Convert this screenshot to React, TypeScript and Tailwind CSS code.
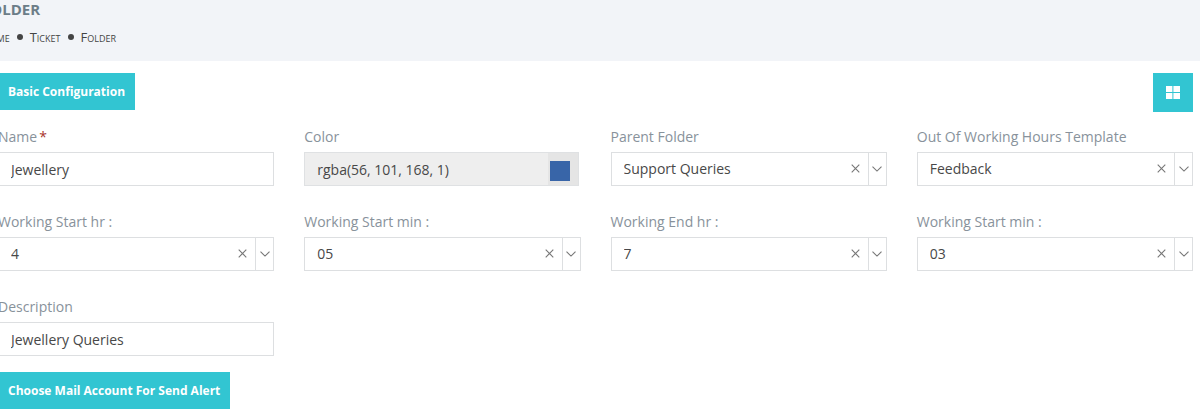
import React, { useId, useRef, useState } from 'react';

interface SelectFieldProps {
  label: string;
  initial: string;
  options: string[];
}

interface TextFieldProps {
  label: string;
  initial: string;
  required?: boolean;
}

const hours = Array.from({ length: 24 }, (_, i) => String(i));
const minutes = Array.from({ length: 60 }, (_, i) => String(i).padStart(2, '0'));

const labelClass = 'block text-sm leading-5 text-[#88929b] mb-[5px]';

const TextField: React.FC<TextFieldProps> = ({ label, initial, required }) => {
  const id = useId();
  const [value, setValue] = useState(initial);

  return (
    <div>
      <label htmlFor={id} className={labelClass}>
        {label}
        {required && <span className="text-sm text-[#a8342c] ml-0.5">*</span>}
      </label>
      <input
        id={id}
        type="text"
        value={value}
        required={required}
        onChange={(e) => setValue(e.target.value)}
        className="block w-full h-[34px] px-3 pt-px border border-[#dddfe1] bg-white text-sm text-[#484848] focus:outline-none focus:border-[#93a1bb]"
      />
    </div>
  );
};

const ColorField: React.FC = () => {
  const id = useId();

  return (
    <div>
      <label htmlFor={id} className={labelClass}>Color</label>
      <div className="flex h-[34px] mr-0.5 border border-[#dfe1e3] bg-[#eeeeee]">
        <input
          id={id}
          type="text"
          readOnly
          value="rgba(56, 101, 168, 1)"
          className="flex-1 min-w-0 px-3 pt-px text-sm text-[#484848] focus:outline-none"
        />
        <button type="button" aria-label="Pick color" className="w-[30px] pl-0.5 pt-1 bg-[#e5e5e5]">
          <span className="block size-5 bg-[#3865a8]" />
        </button>
      </div>
    </div>
  );
};

const SelectField: React.FC<SelectFieldProps> = ({ label, initial, options }) => {
  const id = useId();
  const ref = useRef<HTMLSelectElement>(null);
  const [value, setValue] = useState(initial);

  return (
    <div>
      <label htmlFor={id} className={labelClass}>{label}</label>
      <div className="flex h-[34px] border border-[#dddfe1] bg-white text-[#777777]">
        <select
          id={id}
          ref={ref}
          value={value}
          onChange={(e) => setValue(e.target.value)}
          className="flex-1 min-w-0 appearance-none px-3 text-sm text-[#484848] focus:outline-none"
        >
          <option value="" />
          {options.map((option) => (
            <option key={option} value={option}>{option}</option>
          ))}
        </select>
        <button
          type="button"
          aria-label={`Clear ${label}`}
          onClick={() => setValue('')}
          className="flex w-[25px] items-center justify-center pb-px"
        >
          <svg width="9" height="9" viewBox="0 0 9 9" fill="none" stroke="currentColor" strokeWidth="1.1">
            <path d="M0.7 0.7l7.6 7.6M8.3 0.7l-7.6 7.6" />
          </svg>
        </button>
        <button
          type="button"
          aria-label={`Open ${label}`}
          onClick={() => ref.current?.showPicker()}
          className="flex w-[18px] items-center justify-center border-l border-[#dddfe1] pb-px"
        >
          <svg width="10" height="6" viewBox="0 0 10 6" fill="none" stroke="currentColor" strokeWidth="1.1">
            <path d="M0.5 0.7l4.5 4.4 4.5-4.4" />
          </svg>
        </button>
      </div>
    </div>
  );
};

const App: React.FC = () => {
  return (
    <div className="overflow-hidden bg-white font-['Open_Sans',sans-serif]">
      <header className="h-[61px] -ml-5 bg-[#f2f4f8]">
        <h1 className="pl-0.5 text-[15px] leading-[18px] font-bold text-[#6c7d88]">FOLDER</h1>
        <nav aria-label="Breadcrumb" className="mt-2.5">
          <ol className="flex items-center gap-[7px] text-[13px] leading-[18px] text-[#444444] [font-variant:small-caps]">
            <li><a href="#home">Home</a></li>
            <li className="size-1.5 rounded-full bg-[#444444]" aria-hidden="true" />
            <li><a href="#ticket">Ticket</a></li>
            <li className="size-1.5 rounded-full bg-[#444444]" aria-hidden="true" />
            <li><a href="#folder">Folder</a></li>
          </ol>
        </nav>
      </header>

      <main className="-ml-0.5 pt-3 pb-[7px] pr-[7px]">
        <div className="flex items-start justify-between">
          <button type="button" className="h-[37px] px-2.5 bg-[#32c5d2] text-xs font-bold text-white">
            Basic Configuration
          </button>
          <button type="button" aria-label="Grid view" className="flex h-[39px] w-10 items-center justify-center bg-[#32c5d2] text-white">
            <svg width="14" height="13" viewBox="0 0 14 13" fill="currentColor">
              <path d="M0 0h6.4v6H0zM7.4 0H14v6H7.4zM0 7h6.4v6H0zM7.4 7H14v6H7.4z" />
            </svg>
          </button>
        </div>

        <form className="mt-[15px] grid grid-cols-4 gap-x-[30px] gap-y-[26px]">
          <TextField label="Name" initial="Jewellery" required />
          <ColorField />
          <SelectField label="Parent Folder" initial="Support Queries" options={['Support Queries']} />
          <SelectField label="Out Of Working Hours Template" initial="Feedback" options={['Feedback']} />
          <SelectField label="Working Start hr :" initial="4" options={hours} />
          <SelectField label="Working Start min :" initial="05" options={minutes} />
          <SelectField label="Working End hr :" initial="7" options={hours} />
          <SelectField label="Working Start min :" initial="03" options={minutes} />
          <TextField label="Description" initial="Jewellery Queries" />
        </form>

        <button type="button" className="mt-4 block h-[37px] px-2.5 bg-[#32c5d2] text-xs font-bold text-white">
          Choose Mail Account For Send Alert
        </button>
      </main>
    </div>
  );
};

export default App;
